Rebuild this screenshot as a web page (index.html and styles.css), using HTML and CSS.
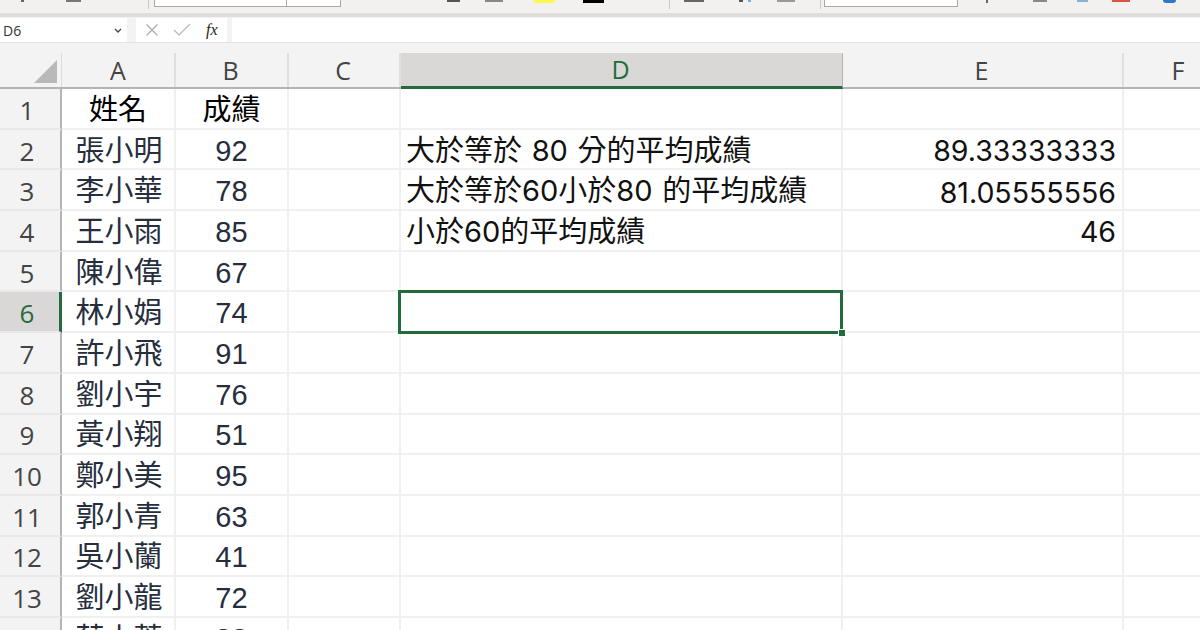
FILE: index.html
```html
<!DOCTYPE html>
<html lang="zh-Hant">
<head>
  <meta charset="UTF-8" />
  <title>Excel</title>
  <link rel="stylesheet" href="styles.css">
</head>
<body>
  <!-- Ribbon, only its bottom edge is in the picture -->
  <div class="ribbon">
    <span class="bit bit-dot"></span>
    <span class="bit bit-icon"></span>
    <span class="sep sep-font"></span>
    <div class="combo combo-font"><span class="combo-name"></span><span class="combo-size"></span></div>
    <span class="bit bit-dark"></span>
    <span class="bit bit-gray"></span>
    <span class="bit bit-yellow"></span>
    <span class="bit bit-black"></span>
    <span class="sep sep-align"></span>
    <span class="bit bit-wide"></span>
    <span class="bit bit-dot2"></span>
    <span class="bit bit-blue"></span>
    <span class="bit bit-gray2"></span>
    <span class="sep sep-num"></span>
    <div class="combo combo-num"></div>
    <span class="bit bit-dot3"></span>
    <span class="bit bit-dot4"></span>
    <span class="bit bit-blue2"></span>
    <span class="bit bit-red"></span>
    <span class="bit bit-round"></span>
  </div>

  <div class="formula-bar">
    <div class="name-box">
      <span>D6</span>
      <svg class="chevron" viewBox="0 0 8 5"><path d="M1 1l3 3 3-3" fill="none" stroke="#444" stroke-width="1.3"/></svg>
    </div>
    <div class="fx-box">
      <svg class="fx-icon" viewBox="0 0 14 14"><path d="M1.5 1.5l11 11M12.5 1.5l-11 11" fill="none" stroke="#a8a8a8" stroke-width="1.1"/></svg>
      <svg class="fx-icon" viewBox="0 0 18 14"><path d="M1 7l5 5L17 1" fill="none" stroke="#b4b4b4" stroke-width="1.1"/></svg>
      <span class="fx-text">fx</span>
    </div>
    <div class="formula-input"></div>
  </div>

  <div class="sheet">
    <div class="row head-row">
      <div class="corner"><svg viewBox="0 0 23 23"><path d="M0 23L23 0v23z" fill="#b9b9b9"/></svg></div>
      <div class="col-head">A</div>
      <div class="col-head">B</div>
      <div class="col-head">C</div>
      <div class="col-head selected">D</div>
      <div class="col-head">E</div>
      <div class="col-head">F</div>
    </div>

    <div class="row"><div class="row-head">1</div><div class="cell title">姓名</div><div class="cell title">成績</div><div class="cell"></div><div class="cell"></div><div class="cell"></div><div class="cell"></div></div>
    <div class="row"><div class="row-head">2</div><div class="cell name">張小明</div><div class="cell score">92</div><div class="cell"></div><div class="cell label">大於等於 80 分的平均成績</div><div class="cell value">89.33333333</div><div class="cell"></div></div>
    <div class="row"><div class="row-head">3</div><div class="cell name">李小華</div><div class="cell score">78</div><div class="cell"></div><div class="cell label">大於等於60小於80 的平均成績</div><div class="cell value value-low">81.05555556</div><div class="cell"></div></div>
    <div class="row"><div class="row-head">4</div><div class="cell name">王小雨</div><div class="cell score">85</div><div class="cell"></div><div class="cell label">小於60的平均成績</div><div class="cell value">46</div><div class="cell"></div></div>
    <div class="row"><div class="row-head">5</div><div class="cell name">陳小偉</div><div class="cell score">67</div><div class="cell"></div><div class="cell"></div><div class="cell"></div><div class="cell"></div></div>
    <div class="row"><div class="row-head active">6</div><div class="cell name">林小娟</div><div class="cell score">74</div><div class="cell"></div><div class="cell"></div><div class="cell"></div><div class="cell"></div></div>
    <div class="row"><div class="row-head">7</div><div class="cell name">許小飛</div><div class="cell score">91</div><div class="cell"></div><div class="cell"></div><div class="cell"></div><div class="cell"></div></div>
    <div class="row"><div class="row-head">8</div><div class="cell name">劉小宇</div><div class="cell score">76</div><div class="cell"></div><div class="cell"></div><div class="cell"></div><div class="cell"></div></div>
    <div class="row"><div class="row-head">9</div><div class="cell name">黃小翔</div><div class="cell score">51</div><div class="cell"></div><div class="cell"></div><div class="cell"></div><div class="cell"></div></div>
    <div class="row"><div class="row-head">10</div><div class="cell name">鄭小美</div><div class="cell score">95</div><div class="cell"></div><div class="cell"></div><div class="cell"></div><div class="cell"></div></div>
    <div class="row"><div class="row-head">11</div><div class="cell name">郭小青</div><div class="cell score">63</div><div class="cell"></div><div class="cell"></div><div class="cell"></div><div class="cell"></div></div>
    <div class="row"><div class="row-head">12</div><div class="cell name">吳小蘭</div><div class="cell score">41</div><div class="cell"></div><div class="cell"></div><div class="cell"></div><div class="cell"></div></div>
    <div class="row"><div class="row-head">13</div><div class="cell name">劉小龍</div><div class="cell score">72</div><div class="cell"></div><div class="cell"></div><div class="cell"></div><div class="cell"></div></div>
    <div class="row"><div class="row-head">14</div><div class="cell name">蔡小蓉</div><div class="cell score">88</div><div class="cell"></div><div class="cell"></div><div class="cell"></div><div class="cell"></div></div>

    <!-- Selected cell D6 -->
    <div class="selection"><span class="handle"></span></div>
  </div>
</body>
</html>
```

FILE: styles.css
```css
* {
  margin: 0;
  padding: 0;
  box-sizing: border-box;
}

html,
body {
  width: 1200px;
  height: 630px;
  overflow: hidden;
}

body {
  background-color: #f3f3f3;
  font-family: "Open Sans", "Noto Sans CJK TC", sans-serif;
}

/* Ribbon */
.ribbon {
  display: flex;
  align-items: flex-start;
  height: 17px;
  background-color: #f2f1ef;
  border-bottom: 4px solid #dedddb;
  overflow: hidden;
}

.bit {
  display: block;
  flex: none;
  height: 2px;
  background-color: #666;
}

.bit-dot { width: 3px; margin-left: 21px; }
.bit-icon { width: 15px; margin-left: 42px; background-color: #777; }
.bit-dark { width: 13px; margin-left: 106px; background-color: #555; }
.bit-gray { width: 18px; margin-left: 25px; background-color: #888; }
.bit-yellow { width: 21px; height: 3px; margin-left: 31px; background-color: #fdf94e; }
.bit-black { width: 21px; height: 3px; margin-left: 28px; background-color: #000; }
.bit-wide { width: 20px; margin-left: 14px; background-color: #666; }
.bit-dot2 { width: 4px; margin-left: 35px; background-color: #555; }
.bit-blue { width: 3px; margin-left: 5px; background-color: #6db3e8; }
.bit-gray2 { width: 18px; margin-left: 26px; background-color: #999; }
.bit-dot3 { width: 2px; height: 3px; margin-left: 28px; background-color: #666; }
.bit-dot4 { width: 14px; margin-left: 45px; background-color: #888; }
.bit-blue2 { width: 11px; margin-left: 30px; background-color: #8ab0d4; }
.bit-red { width: 18px; margin-left: 24px; background-color: #d9553f; }
.bit-round { width: 13px; height: 3px; margin-left: 33px; background-color: #2f78c4; border-radius: 0 0 6px 6px; }

.sep {
  display: block;
  flex: none;
  width: 1px;
  height: 9px;
  background-color: #c8c8c6;
}

.sep-font { margin-left: 67px; }
.sep-align { margin-left: 65px; }
.sep-num { margin-left: 25px; }

.combo {
  display: flex;
  flex: none;
  height: 7px;
  background-color: #fff;
  border: 1px solid #a8a8a8;
  border-top: none;
}

.combo-font { width: 187px; margin-left: 5px; }
.combo-num { width: 134px; margin-left: 3px; }
.combo-name { width: 132px; border-right: 1px solid #a8a8a8; }

/* Formula bar */
.formula-bar {
  display: flex;
  height: 26px;
  padding-top: 1px;
  border-bottom: 1px solid #e4e4e4;
}

.name-box {
  display: flex;
  align-items: center;
  justify-content: space-between;
  width: 127px;
  padding: 0 5px 0 3px;
  background-color: #fff;
  font-size: 14px;
  color: #333;
}

.chevron {
  width: 8px;
  height: 5px;
}

.fx-box {
  display: flex;
  align-items: center;
  width: 91px;
  margin-left: 9px;
  padding-left: 9px;
  gap: 14px;
  background-color: #fff;
}

.fx-icon {
  width: 14px;
  height: 14px;
}

.fx-icon + .fx-icon {
  width: 18px;
}

.fx-text {
  margin-left: 1px;
  font-family: "Liberation Serif", serif;
  font-style: italic;
  font-size: 16px;
  color: #222;
}

.formula-input {
  flex: 1;
  margin-left: 5px;
  background-color: #fff;
}

/* Sheet grid */
.sheet {
  position: relative;
  margin-top: 10px;
}

.row {
  display: grid;
  grid-template-columns: 62px 114px 113px 112px 442px 281px 112px;
  grid-template-rows: 100%;
  height: 40.7px;
  background-color: #fff;
}

.head-row {
  height: 36px;
  background-color: #f3f3f3;
  border-bottom: 2px solid #b4b4b4;
}

.corner {
  display: flex;
  align-items: flex-end;
  justify-content: flex-end;
  padding: 0 4px 4px 0;
  border-right: 1px solid #dcdcdc;
}

.corner svg {
  width: 23px;
  height: 23px;
}

.col-head {
  display: flex;
  align-items: center;
  justify-content: center;
  height: 34px;
  font-size: 25px;
  line-height: 34px;
  color: #444;
  border-right: 2px solid #dfdfdf;
}

.col-head + .col-head {
  padding-right: 2px;
}

.col-head.selected {
  height: 36px;
  padding-bottom: 2px;
  background-color: #d9d8d6;
  color: #236b3c;
  border-right: 1px solid #b4b4b4;
  border-bottom: 3px solid #236b3c;
}

.row-head {
  display: flex;
  align-items: center;
  justify-content: center;
  padding: 3px 6px 0 0;
  background-color: #f3f3f3;
  font-size: 26px;
  line-height: 36px;
  color: #444;
  border-right: 2px solid #b4b4b4;
  border-bottom: 2px solid #e8e8e8;
}

.row-head.active {
  padding-right: 5px;
  background-color: #d9d8d6;
  color: #236b3c;
  border-right: 3px solid #236b3c;
}

.cell {
  display: flex;
  align-items: center;
  min-width: 0;
  padding-top: 3px;
  white-space: nowrap;
  font-family: "Liberation Sans", "Noto Sans CJK TC", sans-serif;
  font-size: 29px;
  line-height: 36px;
  border-right: 2px solid #f0f0f0;
  border-bottom: 2px solid #f0f0f0;
}

.title {
  justify-content: center;
  color: #000;
}

.name {
  justify-content: center;
  padding-left: 2px;
  color: #262e3d;
}

.score {
  justify-content: center;
  color: #262e3d;
}

.label {
  padding-left: 5px;
  font-family: "Inter", "Noto Sans CJK TC", sans-serif;
  word-spacing: 1.5px;
  color: #111;
}

.value {
  justify-content: flex-end;
  padding-right: 6px;
  font-family: "Inter", "Liberation Sans", sans-serif;
  font-size: 28.5px;
  color: #111;
}

.value-low {
  padding-top: 6px;
}

/* Selection box lies over the grid */
.selection {
  position: absolute;
  left: 398px;
  top: 237px;
  width: 445px;
  height: 44px;
  border: 3px solid #236b3c;
}

.handle {
  position: absolute;
  right: -6px;
  bottom: -6px;
  width: 8px;
  height: 8px;
  background-color: #236b3c;
  border: 1px solid #fff;
}
```
